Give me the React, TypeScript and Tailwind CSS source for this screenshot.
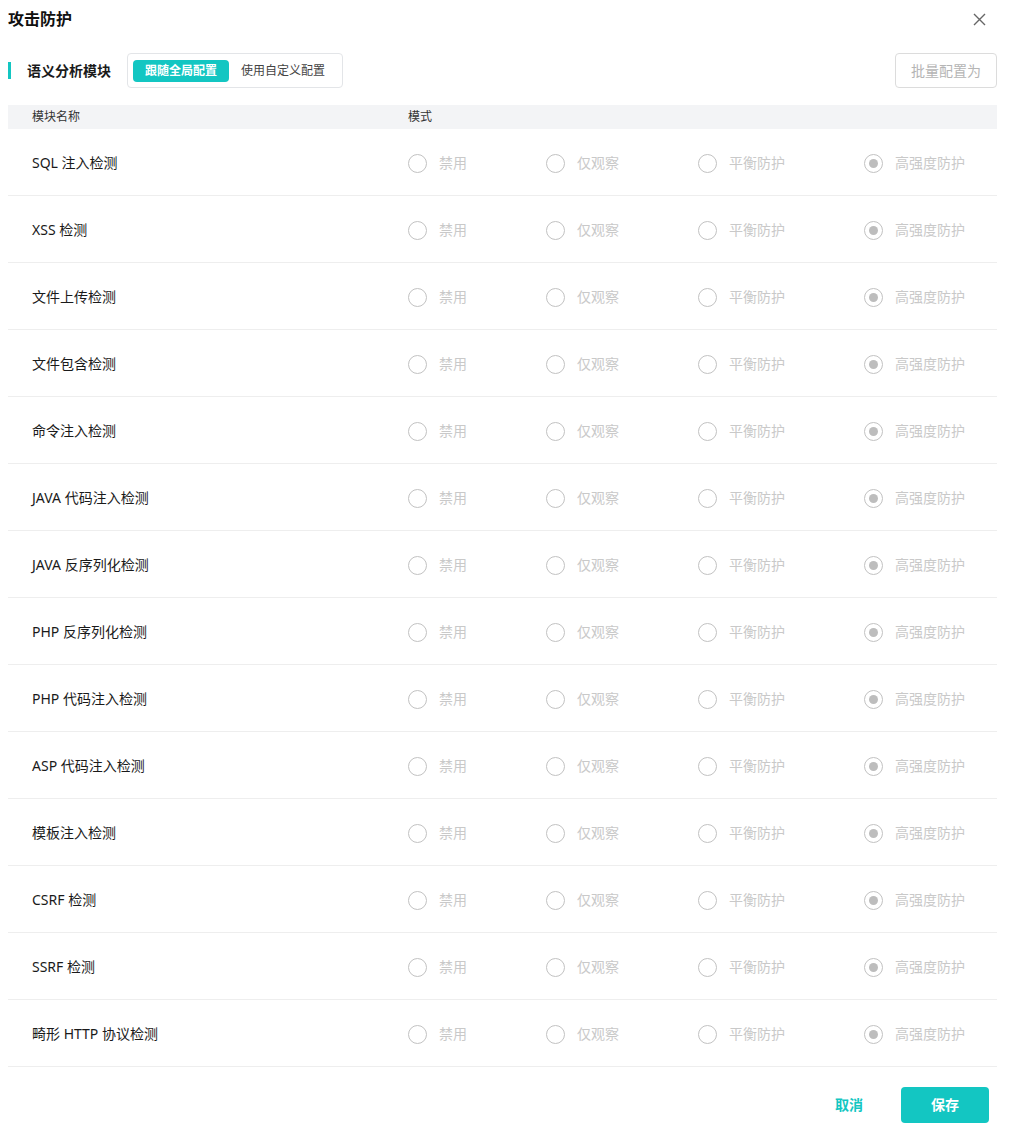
const modules = [
  "SQL 注入检测",
  "XSS 检测",
  "文件上传检测",
  "文件包含检测",
  "命令注入检测",
  "JAVA 代码注入检测",
  "JAVA 反序列化检测",
  "PHP 反序列化检测",
  "PHP 代码注入检测",
  "ASP 代码注入检测",
  "模板注入检测",
  "CSRF 检测",
  "SSRF 检测",
  "畸形 HTTP 协议检测",
];

const modes = ["禁用", "仅观察", "平衡防护", "高强度防护"];

const Radio = ({ checked, label }: { checked: boolean; label: string }) => (
  <label className="flex items-center gap-3 cursor-not-allowed">
    <span className="w-[19px] h-[19px] rounded-full border-[1.5px] border-[#c2c2c2] flex items-center justify-center">
      {checked && <span className="w-[9px] h-[9px] rounded-full bg-[#bdbdbd]" />}
    </span>
    <span className="text-sm text-[#c9c9c9]">{label}</span>
  </label>
);

export default function App() {
  return (
    <div
      className="w-[1012px] h-[1148px] bg-white text-[#1a1a1a]"
      style={{ fontFamily: '"Noto Sans", "Noto Sans CJK SC", sans-serif' }}
    >
      {/* Header */}
      <div className="flex items-center justify-between pl-2 pr-[26px] h-[38px]">
        <h2 className="text-base font-bold text-[#111]">攻击防护</h2>
        <svg width="13" height="13" viewBox="0 0 13 13" className="text-[#666]">
          <path d="M1 1L12 12M12 1L1 12" stroke="currentColor" strokeWidth="1.4" />
        </svg>
      </div>

      {/* Section bar */}
      <div className="flex items-center justify-between ml-2 w-[989px] mt-[15px]">
        <div className="flex items-center">
          <span className="w-[3px] h-[17px] bg-[#13c6c2]" />
          <span className="ml-4 text-sm font-bold">语义分析模块</span>
          <div className="ml-4 h-[35px] flex items-center gap-3 px-[5px] border border-[#e3e5e8] rounded">
            <button className="h-[22px] px-3 rounded bg-[#13c6c2] text-white text-xs font-bold">
              跟随全局配置
            </button>
            <button className="h-[22px] pr-3 text-xs text-[#444]">使用自定义配置</button>
          </div>
        </div>
        <button className="h-[35px] w-[102px] border border-[#dcdcdc] rounded text-sm text-[#b5b5b5]">
          批量配置为
        </button>
      </div>

      {/* Table */}
      <div className="ml-2 w-[989px] mt-[17px]">
        <div className="flex items-center h-[24px] bg-[#f3f4f6] text-xs text-[#333]">
          <span className="pl-6 w-[400px]">模块名称</span>
          <span>模式</span>
        </div>
        {modules.map((name) => (
          <div key={name} className="flex items-center h-[67px] pt-[2px] border-b border-[#eeeeee]">
            <span className="pl-6 w-[400px] text-sm">{name}</span>
            <div className="flex items-center gap-[79px]">
              {modes.map((m) => (
                <Radio key={m} label={m} checked={m === "高强度防护"} />
              ))}
            </div>
          </div>
        ))}
      </div>

      {/* Footer */}
      <div className="flex items-center justify-end gap-[38px] pr-[23px] mt-[20px]">
        <button className="text-sm font-bold text-[#13c6c2]">取消</button>
        <button className="w-[88px] h-[36px] rounded bg-[#13c6c2] text-white text-sm font-bold">
          保存
        </button>
      </div>
    </div>
  );
}
